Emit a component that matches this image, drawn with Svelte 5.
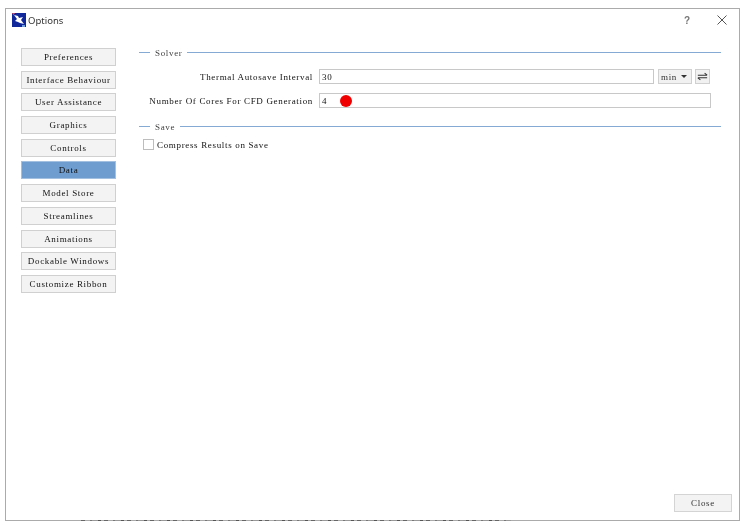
<script lang="ts">
  const pages = [
    'Preferences',
    'Interface Behaviour',
    'User Assistance',
    'Graphics',
    'Controls',
    'Data',
    'Model Store',
    'Streamlines',
    'Animations',
    'Dockable Windows',
    'Customize Ribbon'
  ];
  let selected = $state('Data');
  let autosave = $state('30');
  let cores = $state('4');
  let compress = $state(false);
</script>

<div class="dialog">
  <header class="titlebar">
    <svg class="app-icon" viewBox="0 0 14 14" width="14" height="14" aria-hidden="true">
      <rect width="14" height="14" fill="#10289a" />
      <path d="M2 2 L6 3 L7 5 L11 4 L9 7 L12 11 L8 10 L6 9 L3 8 L5 6 Z" fill="#fff" />
      <path d="M0 0 L3 0 L1.5 2.5 Z" fill="#d84a5a" />
      <path d="M10 12 L13 12 L13 14 L10 14 Z" fill="#6f9fe0" />
    </svg>
    <span class="title">Options</span>
    <span class="help">?</span>
    <svg class="close-x" viewBox="0 0 10 10" width="10" height="10" aria-hidden="true">
      <path d="M0.5 0.5 L9.5 9.5 M9.5 0.5 L0.5 9.5" stroke="#555" stroke-width="1" fill="none" />
    </svg>
  </header>

  <div class="body">
    <nav class="sidebar">
      {#each pages as page}
        <button
          type="button"
          class="page-btn"
          class:active={selected === page}
          onclick={() => (selected = page)}
        >
          {page}
        </button>
      {/each}
    </nav>

    <main class="content">
      <div class="section-head"><span>Solver</span></div>
      <div class="row first">
        <label class="label" for="autosave">Thermal Autosave Interval</label>
        <input id="autosave" class="field short" type="text" bind:value={autosave} />
        <button type="button" class="unit">min <span class="caret"></span></button>
        <button type="button" class="swap" aria-label="Swap units">
          <svg viewBox="0 0 13 10" width="11" height="9" aria-hidden="true">
            <path d="M1 3.5 H12 M12 3.5 L9 1 M12 6.5 H1 M1 6.5 L4 9" stroke="#333" stroke-width="1.2" fill="none" />
          </svg>
        </button>
      </div>
      <div class="row second">
        <label class="label" for="cores">Number Of Cores For CFD Generation</label>
        <div class="field-wrap">
          <input id="cores" class="field" type="text" bind:value={cores} />
          <span class="marker"></span>
        </div>
      </div>
      <div class="section-head save"><span>Save</span></div>
      <label class="check">
        <input type="checkbox" bind:checked={compress} />
        <span>Compress Results on Save</span>
      </label>
    </main>
  </div>

  <footer class="footer">
    <button type="button" class="close-btn">Close</button>
  </footer>
</div>

<style>
  :global(body) {
    background: #fff;
  }

  .dialog {
    position: relative;
    box-sizing: border-box;
    width: 735px;
    height: 513px;
    margin: 8px 0 0 5px;
    border: 1px solid #ababab;
    background: #fff;
    display: flex;
    flex-direction: column;
    font-family: 'Liberation Serif', serif;
    font-size: 9px;
    letter-spacing: 0.66px;
    color: #111;
    filter: blur(0.35px);
  }

  /* cut-off text of the window behind, showing along the bottom edge */
  .dialog::after {
    content: '';
    position: absolute;
    left: 75px;
    bottom: -1px;
    width: 430px;
    height: 1px;
    background: repeating-linear-gradient(90deg, #666 0 4px, #aaa 4px 9px, #777 9px 11px, #999 11px 17px, #555 17px 20px, #aaa 20px 23px);
  }

  .titlebar {
    display: flex;
    align-items: center;
    height: 22px;
    padding: 0 12px 0 6px;
    flex: none;
    box-sizing: border-box;
  }

  .app-icon {
    margin-right: 2px;
  }

  .title {
    font-family: 'Noto Sans', sans-serif;
    font-size: 9.5px;
    letter-spacing: 0;
    color: #333;
    flex: 1;
  }

  .help {
    font-family: 'Liberation Sans', sans-serif;
    font-size: 10px;
    letter-spacing: 0;
    font-weight: bold;
    color: #777;
    margin-right: 27px;
  }

  .body {
    display: flex;
    flex: 1;
    padding: 17px 0 0 15px;
    min-height: 0;
  }

  .sidebar {
    width: 95px;
    flex: none;
    display: flex;
    flex-direction: column;
    gap: 4.7px;
  }

  .page-btn {
    height: 18px;
    padding: 0;
    background: #f3f3f3;
    border: 1px solid #d0d0d0;
    font: inherit;
    letter-spacing: inherit;
    color: #111;
    cursor: pointer;
  }

  .page-btn.active {
    background: #6f9dd0;
    border-color: #a4c0e0;
  }

  .content {
    flex: 1;
    padding: 0 18px 0 23px;
  }

  .section-head {
    display: flex;
    align-items: center;
    gap: 5px;
    height: 9px;
    color: #444;
  }

  .section-head::before {
    content: '';
    width: 11px;
    border-top: 1px solid #85aad4;
  }

  .section-head::after {
    content: '';
    flex: 1;
    border-top: 1px solid #85aad4;
  }

  .row {
    display: flex;
    align-items: center;
    gap: 6px;
    height: 15px;
  }

  .row.first {
    margin-top: 12px;
  }

  .row.second {
    margin-top: 9px;
    padding-right: 10px;
  }

  .label {
    width: 174px;
    flex: none;
    text-align: right;
  }

  .field-wrap {
    position: relative;
    flex: 1;
    display: flex;
  }

  .field {
    box-sizing: border-box;
    width: 100%;
    height: 15px;
    padding: 0 2px;
    border: 1px solid #c8c8c8;
    background: #fff;
    font: inherit;
    letter-spacing: inherit;
    color: #111;
    outline: none;
  }

  .field.short {
    flex: 1;
    width: auto;
    min-width: 0;
  }

  .marker {
    position: absolute;
    left: 21px;
    top: 1.5px;
    width: 12px;
    height: 12px;
    border-radius: 50%;
    background: #f00000;
  }

  .unit {
    box-sizing: border-box;
    width: 34px;
    height: 15px;
    margin-left: -2px;
    padding: 0 0 0 2px;
    background: #f1f1f1;
    border: 1px solid #d0d0d0;
    font: inherit;
    letter-spacing: inherit;
    display: inline-flex;
    align-items: center;
    gap: 4px;
    color: #333;
  }

  .caret {
    width: 0;
    height: 0;
    border-left: 3px solid transparent;
    border-right: 3px solid transparent;
    border-top: 3px solid #333;
  }

  .swap {
    box-sizing: border-box;
    width: 15px;
    height: 15px;
    margin-left: -3px;
    margin-right: 11px;
    padding: 0;
    background: #f1f1f1;
    border: 1px solid #d0d0d0;
    display: inline-flex;
    align-items: center;
    justify-content: center;
  }

  .save {
    margin-top: 14px;
  }

  .check {
    display: flex;
    align-items: center;
    gap: 3px;
    margin: 8px 0 0 4px;
    height: 11px;
  }

  .check input {
    appearance: none;
    box-sizing: border-box;
    width: 11px;
    height: 11px;
    margin: 0;
    background: #fff;
    border: 1px solid #bdbdbd;
  }

  .footer {
    display: flex;
    justify-content: flex-end;
    padding: 0 7px 8px 0;
    flex: none;
  }

  .close-btn {
    width: 58px;
    height: 18px;
    padding: 0;
    background: #f3f3f3;
    border: 1px solid #d4d4d4;
    font: inherit;
    letter-spacing: inherit;
    color: #333;
  }
</style>
